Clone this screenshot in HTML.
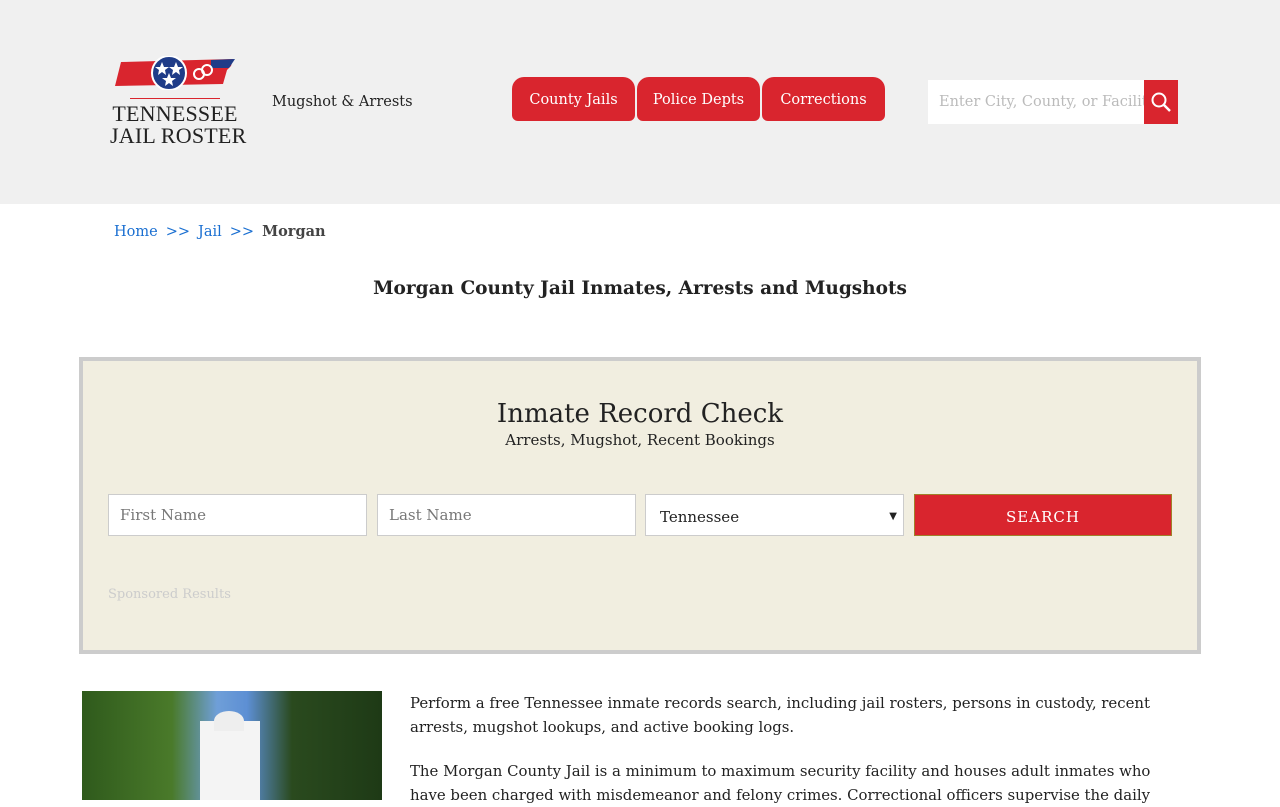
<!DOCTYPE html>
<html><head><meta charset="utf-8"><style>
*{box-sizing:border-box;margin:0;padding:0}
body{width:1280px;height:800px;overflow:hidden;background:#fff;font-family:"DejaVu Serif","Liberation Serif",serif;color:#222}
.hdr{height:204px;background:#f0f0f0;position:relative}
.logo{position:absolute;left:110px;top:56px;width:130px;text-align:center}
.logo .t{font-family:"Liberation Serif",serif;font-size:22px;line-height:22px;color:#222;white-space:nowrap;letter-spacing:.2px}
.tag{position:absolute;left:272px;top:94px;font-size:14.5px;color:#222}
.nav{position:absolute;left:512px;top:77px;display:flex}
.nav div{background:#d9252e;color:#fff;font-size:14.5px;height:44px;line-height:46px;width:123px;text-align:center;border-radius:12px 12px 6px 6px;margin-right:2px}
.srch{position:absolute;left:928px;top:80px;width:250px;height:44px;display:flex}
.srch .in{flex:1;background:#fff;color:#bbb;font-size:14.5px;line-height:44px;padding-left:11px;white-space:nowrap;overflow:hidden}
.srch .b{width:34px;background:#d9252e;display:flex;align-items:center;justify-content:center}
.bc{position:absolute;left:114px;top:223px;font-size:14.5px;color:#1a6fd1}
.bc b{color:#444}
.bc span{margin:0 8px}
h1{position:absolute;left:0;width:1280px;top:278px;text-align:center;font-size:18.5px;font-weight:bold;color:#222}
.box{position:absolute;left:79px;top:357px;width:1122px;height:297px;background:#f1eee0;border:4px solid #ccc}
.box h2{text-align:center;font-weight:normal;font-size:26px;margin-top:38px;color:#222}
.box .s{text-align:center;font-size:15px;margin-top:2px}
.f{position:absolute;top:133px;height:42px;width:259px;background:#fff;border:1px solid #ccc;font-size:15px;color:#777;line-height:40px;padding-left:11px}
.go{position:absolute;top:133px;left:831px;width:258px;height:42px;background:#d9252e;border:1px solid #a0802a;color:#fff;text-align:center;line-height:44px;font-size:15px;letter-spacing:1px}
.sp{position:absolute;left:25px;top:226px;font-size:13px;color:#ccc}
.img{position:absolute;left:82px;top:691px;width:300px;height:109px;background:linear-gradient(90deg,#2f5a1c 0,#4a7a2a 30%,#6f9fd8 45%,#5d8fd4 55%,#2a4a1e 70%,#1e3a16 100%);overflow:hidden}
.p{position:absolute;left:410px;width:770px;font-size:14.9px;line-height:24px;color:#222}
</style></head><body>
<div class="hdr">
 <div class="logo">
  <svg width="124" height="34" viewBox="0 0 124 34"><path d="M8 6 L120 3 L118 10 L114 14 L110 28 L2 30 L4 22 Z" fill="#d9252e"/><path d="M98 4 L122 3 L116 12 L98 12Z" fill="#1f3c88"/><circle cx="56" cy="17" r="17" fill="#1f3c88" stroke="#fff" stroke-width="2"/><g fill="#fff"><polygon points="49,6 51,11 56,11 52,14 53,19 49,16 45,19 46,14 42,11 47,11"/><polygon points="63,6 65,11 70,11 66,14 67,19 63,16 59,19 60,14 56,11 61,11"/><polygon points="56,17 58,22 63,22 59,25 60,30 56,27 52,30 53,25 49,22 54,22"/></g><circle cx="86" cy="18" r="5" fill="none" stroke="#fff" stroke-width="2"/><circle cx="94" cy="14" r="5" fill="none" stroke="#fff" stroke-width="2"/></svg>
  <div style="height:1px;background:#d9252e;width:90px;margin:4px auto 4px"></div>
  <div class="t">TENNESSEE</div><div class="t">JAIL ROSTER</div>
 </div>
 <div class="tag">Mugshot &amp; Arrests</div>
 <div class="nav"><div>County Jails</div><div>Police Depts</div><div>Corrections</div></div>
 <div class="srch"><div class="in">Enter City, County, or Facility</div><div class="b"><svg width="22" height="22" viewBox="0 0 22 22"><circle cx="9" cy="9" r="6.5" fill="none" stroke="#fff" stroke-width="2"/><path d="M14 14 L20 20" stroke="#fff" stroke-width="2.5"/></svg></div></div>
</div>
<div class="bc">Home<span>&gt;&gt;</span>Jail<span>&gt;&gt;</span><b>Morgan</b></div>
<h1>Morgan County Jail Inmates, Arrests and Mugshots</h1>
<div class="box">
 <h2>Inmate Record Check</h2>
 <div class="s">Arrests, Mugshot, Recent Bookings</div>
 <div class="f" style="left:25px">First Name</div>
 <div class="f" style="left:294px">Last Name</div>
 <div class="f" style="left:562px;color:#222;line-height:44px;padding-left:14px">Tennessee<span style="position:absolute;right:6px;font-size:10px">&#9660;</span></div>
 <div class="go">SEARCH</div>
 <div class="sp">Sponsored Results</div>
</div>
<div class="img"><div style="position:absolute;left:118px;top:30px;width:60px;height:80px;background:#f4f4f4"></div><div style="position:absolute;left:132px;top:20px;width:30px;height:20px;background:#eee;border-radius:50% 50% 0 0"></div></div>
<div class="p" style="top:691px">Perform a free Tennessee inmate records search, including jail rosters, persons in custody, recent arrests, mugshot lookups, and active booking logs.</div>
<div class="p" style="top:759px">The Morgan County Jail is a minimum to maximum security facility and houses adult inmates who have been charged with misdemeanor and felony crimes. Correctional officers supervise the daily</div>
</body></html>
